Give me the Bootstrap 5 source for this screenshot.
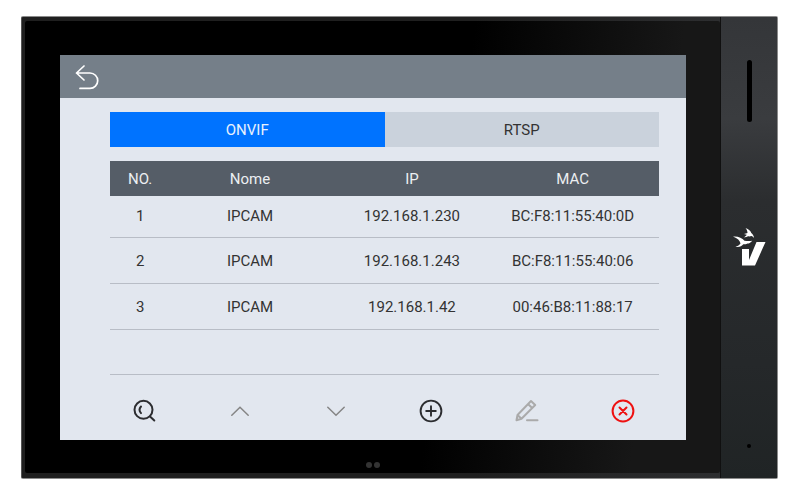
<!DOCTYPE html>
<html lang="pt">
<head>
<meta charset="utf-8">
<meta name="viewport" content="width=device-width, initial-scale=1">
<title>IPCAM – ONVIF</title>
<link href="https://cdn.jsdelivr.net/npm/bootstrap@5.3.0/dist/css/bootstrap.min.css" rel="stylesheet">
<style>
  body { background: #fff; font-family: Roboto, "Liberation Sans", sans-serif; font-size: 15px; line-height: 20px; color: #333; padding: 16px 22px 22px 21px; }
  .device { background: linear-gradient(90deg, #1f1f1f, #1f1f1f 60%, #2e2f31 94%); border: 1px solid #8a8a8a; border-left-color: #555; border-radius: 2px; padding: 4px 0 5px 3px; }
  .glass { background: linear-gradient(97deg, #000 60%, #171717 88%); border-radius: 2px; padding: 34px 34px 0 35px; }
  .side { width: 57px; margin: -4px 0 -5px; background: linear-gradient(#343639, #3a3c3f 22%, #2b2d2f 40%, #25282a 75%, #202425); border-left: 1px solid #101010; }
  .slot { width: 5px; height: 62px; margin-top: 43px; background: #000; }
  .brand { margin-top: 106px; }
  .mic { width: 4px; height: 4px; background: #000; margin-bottom: 30px; }
  .screen { background: #e2e7ef; }
  .topbar { background: #757f89; height: 43px; padding: 0 14px; }
  .content { padding: 14px 27px 0 50px; }
  .tabs .nav-link { background: #cad2dc; color: #333; border: 0; border-radius: 0; height: 35px; padding: 8px 0 7px; }
  .tabs .nav-link.active { background: #0073ff; color: #e8f1fc; }
  .cams { margin: 14px 0 0; table-layout: fixed; --bs-table-bg: transparent; --bs-table-color: #333; }
  .cams th { background: #555d67; color: #eceff2; font-weight: 400; height: 35px; padding: 0; border: 0; vertical-align: middle; }
  .cams td { height: 46px; padding: 2px 0 0; vertical-align: middle; border-bottom: 1px solid #b8bdc6; }
  .cams tbody tr:first-child td { height: 41px; padding-top: 0; }
  .cams tbody tr:last-child td { height: 45px; }
  .cams th:last-child, .cams td:last-child { padding-right: 8px; }
  .c-no { width: 11%; } .c-name { width: 29%; } .c-ip { width: 30%; }
  .tools { padding: 24px 24px 17px 22px; }
  .tools .btn, .topbar .btn { line-height: 0; border: 0; }
  .lights { padding: 22px 0 5px; gap: 2px; }
  .lights span { width: 6px; height: 6px; background: #333; }
</style>
<script src="https://cdn.jsdelivr.net/npm/bootstrap@5.3.0/dist/js/bootstrap.bundle.min.js" defer></script>
</head>
<body>
<div class="device d-flex">
  <div class="glass flex-grow-1">
    <main class="screen">
      <header class="topbar d-flex align-items-center">
        <button type="button" class="btn p-0" aria-label="Voltar">
          <svg width="26" height="26" viewBox="0 0 26 26" fill="none" stroke="#fff" stroke-width="1.7" stroke-linecap="round" stroke-linejoin="round"><path d="M10 2 2.500 9l7.500 7M2.500 9h13.500a7.700 7.700 0 0 1 0 15.400H6"/></svg>
        </button>
      </header>
      <div class="content">
        <div class="tabs nav nav-justified" role="tablist">
          <button type="button" class="nav-link active" role="tab" aria-selected="true">ONVIF</button>
          <button type="button" class="nav-link" role="tab" aria-selected="false">RTSP</button>
        </div>
        <table class="cams table text-center">
          <colgroup><col class="c-no"><col class="c-name"><col class="c-ip"><col></colgroup>
          <thead><tr><th scope="col">NO.</th><th scope="col">Nome</th><th scope="col">IP</th><th scope="col">MAC</th></tr></thead>
          <tbody>
            <tr><td>1</td><td>IPCAM</td><td>192.168.1.230</td><td>BC:F8:11:55:40:0D</td></tr>
            <tr><td>2</td><td>IPCAM</td><td>192.168.1.243</td><td>BC:F8:11:55:40:06</td></tr>
            <tr><td>3</td><td>IPCAM</td><td>192.168.1.42</td><td>00:46:B8:11:88:17</td></tr>
            <tr><td></td><td></td><td></td><td></td></tr>
          </tbody>
        </table>
        <div class="tools d-flex justify-content-between">
          <button type="button" class="btn p-0" aria-label="Pesquisar"><svg width="24" height="24" viewBox="0 0 24 24" fill="none" stroke="#2c2d30" stroke-width="2" stroke-linecap="round"><circle cx="11.500" cy="10.800" r="9"/><path d="m18 17.500 4.300 4M9 7.500c-1.700 1.900-1.700 4.700 0 6.600"/></svg></button>
          <button type="button" class="btn p-0" aria-label="Subir"><svg width="24" height="24" viewBox="0 0 24 24" fill="none" stroke="#858585" stroke-width="1.500" stroke-linecap="round"><path d="m3.800 16.300 8.200-8 8.200 8"/></svg></button>
          <button type="button" class="btn p-0" aria-label="Descer"><svg width="24" height="24" viewBox="0 0 24 24" fill="none" stroke="#858585" stroke-width="1.500" stroke-linecap="round"><path d="m3.800 8.300 8.200 8 8.200-8"/></svg></button>
          <button type="button" class="btn p-0" aria-label="Adicionar"><svg width="24" height="24" viewBox="0 0 24 24" fill="none" stroke="#2c2d30" stroke-width="1.900" stroke-linecap="round"><circle cx="12" cy="12" r="10.400"/><path d="M12 7.200v9.600M7.200 12h9.600"/></svg></button>
          <button type="button" class="btn p-0" aria-label="Editar"><svg width="24" height="24" viewBox="0 0 24 24" fill="none" stroke="#aaa" stroke-width="2" stroke-linejoin="round"><path d="M16 2 20.200 6 6.500 19.800 1.500 21.300 2.500 16zM13 5l4.200 4M2.500 16 6.500 19.800"/><path stroke-linecap="round" d="M12 21.300h10.500"/></svg></button>
          <button type="button" class="btn p-0" aria-label="Excluir"><svg width="24" height="24" viewBox="0 0 24 24" fill="none" stroke="#ee1111" stroke-width="2" stroke-linecap="round"><circle cx="12" cy="12" r="10.400"/><path d="m8.500 8.500 7 7m0-7-7 7"/></svg></button>
        </div>
      </div>
    </main>
    <div class="lights d-flex justify-content-center"><span class="rounded-circle"></span><span class="rounded-circle"></span></div>
  </div>
  <aside class="side d-flex flex-column align-items-center flex-shrink-0">
    <div class="slot rounded-pill"></div>
    <svg class="brand" width="34" height="40" viewBox="0 0 34 40" fill="#fff" role="img" aria-label="Logo">
      <path d="M10 21h7v11L24.500 14H33.500L23 37.500H10z"/>
      <path d="M1 8.500C6 8 10 9.800 12.500 12.700c2.500.3 4.700.5 7.800 0-1.800 2-3.300 2.800-4.800 2.800-1.500.8-3 1-4.200.8C10 18.200 7 19.500 3.500 18.800c2.300-.7 4-1.800 5-3.300C8 12.500 5.500 10.200 1 8.500z"/>
      <path d="M13.500 0c3.300 1.200 5.200 3 5.800 5 1.600 1.200 2.500 2.800 2.800 5.200-.8-1.200-1.700-1.900-2.800-2.100-1.200.4-2.300.4-3.300.2-1.300.9-2.700 1.200-4.200 1 1.500-.7 2.400-1.500 2.900-2.500L12 5.900l3.500-.9c-.1-2-.8-3.600-2-5z"/>
    </svg>
    <div class="mic rounded-circle mt-auto"></div>
  </aside>
</div>
</body>
</html>
